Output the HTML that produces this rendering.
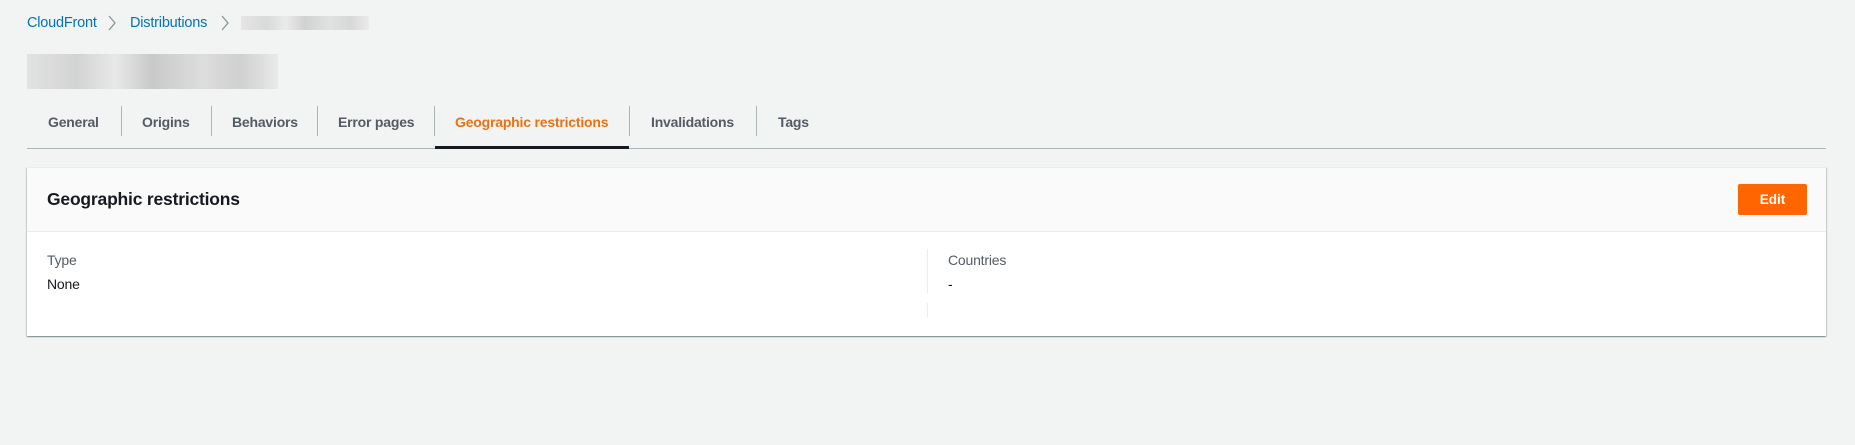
<!DOCTYPE html>
<html><head><meta charset="utf-8"><style>
*{margin:0;padding:0;box-sizing:border-box}
body{width:1855px;height:445px;background:#f2f3f3;font-family:"Liberation Sans",sans-serif;position:relative;overflow:hidden;color:#16191f}
.a{position:absolute;white-space:nowrap}
.bc{top:15px;font-size:14.5px;color:#0073bb;letter-spacing:-0.2px}
.blur{position:absolute;background:linear-gradient(90deg,#ddd,#c8c8c8 20%,#e4e4e4 35%,#bbb 50%,#d6d6d6 70%,#c4c4c4 85%,#e6e6e6)}
.tab{top:114px;font-size:14px;font-weight:bold;color:#545b64;letter-spacing:-0.2px}
.sep{position:absolute;top:106px;width:1px;height:30px;background:#aab7b8}
.card{position:absolute;left:27px;top:167px;width:1799px;height:169px;background:#fff;box-shadow:0 1px 1px 0 rgba(0,28,36,.3),1px 1px 1px 0 rgba(0,28,36,.15),-1px 1px 1px 0 rgba(0,28,36,.15);border-top:1px solid #eaeded}
.hd{position:absolute;left:0;top:0;width:100%;height:64px;background:#fafafa;border-bottom:1px solid #eaeded}
.f{font-size:14px;letter-spacing:-0.2px}
</style></head><body>
<div class="a bc" style="left:27px">CloudFront</div>
<svg style="position:absolute;left:106px;top:13px" width="12" height="20" viewBox="0 0 12 20"><path d="M3 3 L9 10 L3 17" fill="none" stroke="#879596" stroke-width="1.3"/></svg>
<div class="a bc" style="left:130px">Distributions</div>
<svg style="position:absolute;left:219px;top:13px" width="12" height="20" viewBox="0 0 12 20"><path d="M3 3 L9 10 L3 17" fill="none" stroke="#879596" stroke-width="1.3"/></svg>
<div class="blur" style="left:241px;top:16px;width:128px;height:14px;opacity:.6"></div>
<div class="blur" style="left:27px;top:54px;width:251px;height:35px;opacity:.75"></div>
<div class="a tab" style="left:48px">General</div>
<div class="sep" style="left:121px"></div>
<div class="a tab" style="left:142px">Origins</div>
<div class="sep" style="left:211px"></div>
<div class="a tab" style="left:232px">Behaviors</div>
<div class="sep" style="left:317px"></div>
<div class="a tab" style="left:338px">Error pages</div>
<div class="sep" style="left:434px"></div>
<div class="a tab" style="left:455px;color:#ec7211">Geographic restrictions</div>
<div class="sep" style="left:629px"></div>
<div class="a tab" style="left:651px">Invalidations</div>
<div class="sep" style="left:756px"></div>
<div class="a tab" style="left:778px">Tags</div>
<div style="position:absolute;left:27px;top:148px;width:1799px;height:1px;background:#aab7b8"></div>
<div style="position:absolute;left:435px;top:146px;width:194px;height:3px;background:#16191f"></div>
<div class="card">
<div class="hd">
<div class="a" style="left:20px;top:21px;font-size:17.5px;font-weight:bold;letter-spacing:-0.2px">Geographic restrictions</div>
<div class="a" style="left:1711px;top:16px;width:69px;height:31px;background:#ff6600;border-radius:2px;color:#fff;font-weight:bold;font-size:13.5px;text-align:center;line-height:31px">Edit</div>
</div>
<div class="a f" style="left:20px;top:84px;color:#545b64">Type</div>
<div class="a f" style="left:20px;top:108px">None</div>
<div style="position:absolute;left:900px;top:81px;width:1px;height:44px;background:#eaeded"></div>
<div style="position:absolute;left:900px;top:135px;width:1px;height:14px;background:#eaeded"></div>
<div class="a f" style="left:921px;top:84px;color:#545b64">Countries</div>
<div class="a f" style="left:921px;top:108px">-</div>
</div>
</body></html>
